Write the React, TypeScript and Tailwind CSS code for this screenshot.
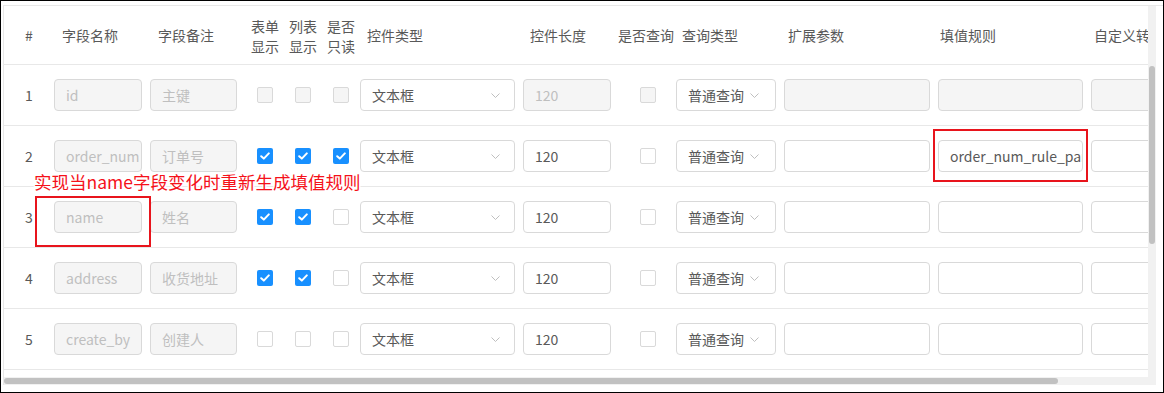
import React from "react";

type Row = {
  n: number;
  name: string;
  remark: string;
  checks: ("on" | "off" | "dis")[];
  lenDisabled: boolean;
  queryDisabled: boolean;
  extDisabled: boolean;
  fill: string;
};

const rows: Row[] = [
  { n: 1, name: "id", remark: "主键", checks: ["dis", "dis", "dis"], lenDisabled: true, queryDisabled: true, extDisabled: true, fill: "" },
  { n: 2, name: "order_num", remark: "订单号", checks: ["on", "on", "on"], lenDisabled: false, queryDisabled: false, extDisabled: false, fill: "order_num_rule_param" },
  { n: 3, name: "name", remark: "姓名", checks: ["on", "on", "off"], lenDisabled: false, queryDisabled: false, extDisabled: false, fill: "" },
  { n: 4, name: "address", remark: "收货地址", checks: ["on", "on", "off"], lenDisabled: false, queryDisabled: false, extDisabled: false, fill: "" },
  { n: 5, name: "create_by", remark: "创建人", checks: ["off", "off", "off"], lenDisabled: false, queryDisabled: false, extDisabled: false, fill: "" },
];

const GRID =
  "grid grid-cols-[50px_96px_96px_38px_38px_38px_163px_95px_58px_108px_154px_153px_159px]";

function Box({ w, disabled, text }: { w: string; disabled?: boolean; text?: string }) {
  return (
    <div
      className={`${w} h-[32px] rounded-[4px] border border-[#d9d9d9] px-[11px] flex items-center overflow-hidden whitespace-nowrap text-[14px] ${
        disabled ? "bg-[#f5f5f5] text-[#bfbfbf]" : "bg-white text-[#595959]"
      }`}
    >
      {text}
    </div>
  );
}

function Check({ state }: { state: "on" | "off" | "dis" }) {
  if (state === "on") {
    return (
      <div className="w-[16px] h-[16px] rounded-[2px] bg-[#1890ff] flex items-center justify-center">
        <svg width="10" height="8" viewBox="0 0 10 8">
          <polyline points="1.2,4.2 3.8,6.6 8.8,1.4" fill="none" stroke="white" strokeWidth="2" strokeLinecap="round" strokeLinejoin="round" />
        </svg>
      </div>
    );
  }
  return (
    <div
      className={`w-[16px] h-[16px] rounded-[2px] border border-[#d9d9d9] ${
        state === "dis" ? "bg-[#f5f5f5]" : "bg-white"
      }`}
    />
  );
}

function Select({ w, text, pr }: { w: string; text: string; pr: string }) {
  return (
    <div
      className={`${w} h-[32px] rounded-[4px] border border-[#d9d9d9] bg-white pl-[11px] ${pr} flex items-center justify-between text-[14px] text-[#595959]`}
    >
      <span>{text}</span>
      <svg width="9" height="5" viewBox="0 0 9 5">
        <polyline points="0.5,0.5 4.5,4.5 8.5,0.5" fill="none" stroke="#bfbfbf" strokeWidth="1" />
      </svg>
    </div>
  );
}

export default function App() {
  return (
    <div
      className="w-[1164px] h-[393px] border border-black bg-white relative overflow-hidden"
      style={{ fontFamily: '"Noto Sans CJK SC", "Noto Sans", sans-serif' }}
    >
      <div className="pl-[2px] pt-[4px] flex flex-col">
        <div className="flex h-[372px] border-t border-[#e8e8e8]">
          <div className="w-[1145px] border-l border-[#e8e8e8] overflow-hidden">
            <div className="w-[1260px]">
              {/* header */}
              <div className={`${GRID} h-[59px] border-b border-[#e8e8e8] items-center text-[14px] text-[#595959]`}>
                <div className="text-center">#</div>
                <div className="pl-[8px]">字段名称</div>
                <div className="pl-[8px]">字段备注</div>
                <div className="text-center leading-[20px] pt-[2px]">表单<br />显示</div>
                <div className="text-center leading-[20px] pt-[2px]">列表<br />显示</div>
                <div className="text-center leading-[20px] pt-[2px]">是否<br />只读</div>
                <div className="pl-[7px]">控件类型</div>
                <div className="pl-[7px]">控件长度</div>
                <div className="pl-0 whitespace-nowrap">是否查询</div>
                <div className="pl-[6px]">查询类型</div>
                <div className="pl-[4px]">扩展参数</div>
                <div className="pl-[2px]">填值规则</div>
                <div className="pl-[3px] whitespace-nowrap">自定义转换器</div>
              </div>
              {/* rows */}
              {rows.map((r) => (
                <div key={r.n} className={`${GRID} h-[61px] border-b border-[#e8e8e8] items-center text-[14px] text-[#595959]`}>
                  <div className="text-center">{r.n}</div>
                  <div>
                    <Box w="w-[88px]" disabled text={r.name} />
                  </div>
                  <div>
                    <Box w="w-[87px]" disabled text={r.remark} />
                  </div>
                  {r.checks.map((c, i) => (
                    <div key={i} className="flex justify-center">
                      <Check state={c} />
                    </div>
                  ))}
                  <div>
                    <Select w="w-[155px]" text="文本框" pr="pr-[14px]" />
                  </div>
                  <div>
                    <Box w="w-[88px]" disabled={r.lenDisabled} text="120" />
                  </div>
                  <div className="pl-[22px]">
                    <Check state={r.queryDisabled ? "dis" : "off"} />
                  </div>
                  <div>
                    <Select w="w-[100px]" text="普通查询" pr="pr-[16px]" />
                  </div>
                  <div>
                    <Box w="w-[146px]" disabled={r.extDisabled} />
                  </div>
                  <div>
                    <Box w="w-[145px]" disabled={r.extDisabled} text={r.fill} />
                  </div>
                  <div>
                    <Box w="w-[146px]" disabled={r.extDisabled} />
                  </div>
                </div>
              ))}
            </div>
          </div>
          <div className="w-[8px] bg-[#f1f1f1] pt-[60px] pl-[1px]">
            <div className="w-[6px] h-[178px] rounded-[3px] bg-[#c1c1c1]" />
          </div>
        </div>
        <div className="flex h-[8px]">
          <div className="w-[1145px] border-l border-[#e8e8e8] bg-[#f1f1f1] pt-[1px]">
            <div className="w-[1054px] h-[6px] rounded-[3px] bg-[#c1c1c1]" />
          </div>
          <div className="w-[8px] bg-[#f1f1f1]" />
        </div>
      </div>

      {/* annotations */}
      <div
        className="absolute left-[33px] top-[170px] text-[17.5px] leading-[22px] text-[#f5111a] whitespace-nowrap [paint-order:stroke_fill] [-webkit-text-stroke:3px_white]"
      >
        实现当name字段变化时重新生成填值规则
      </div>
      <div className="absolute left-[34px] top-[195px] w-[116px] h-[51px] border-2 border-[#e8141c]" />
      <div className="absolute left-[932px] top-[128px] w-[155px] h-[53px] border-2 border-[#e8141c]" />
    </div>
  );
}
